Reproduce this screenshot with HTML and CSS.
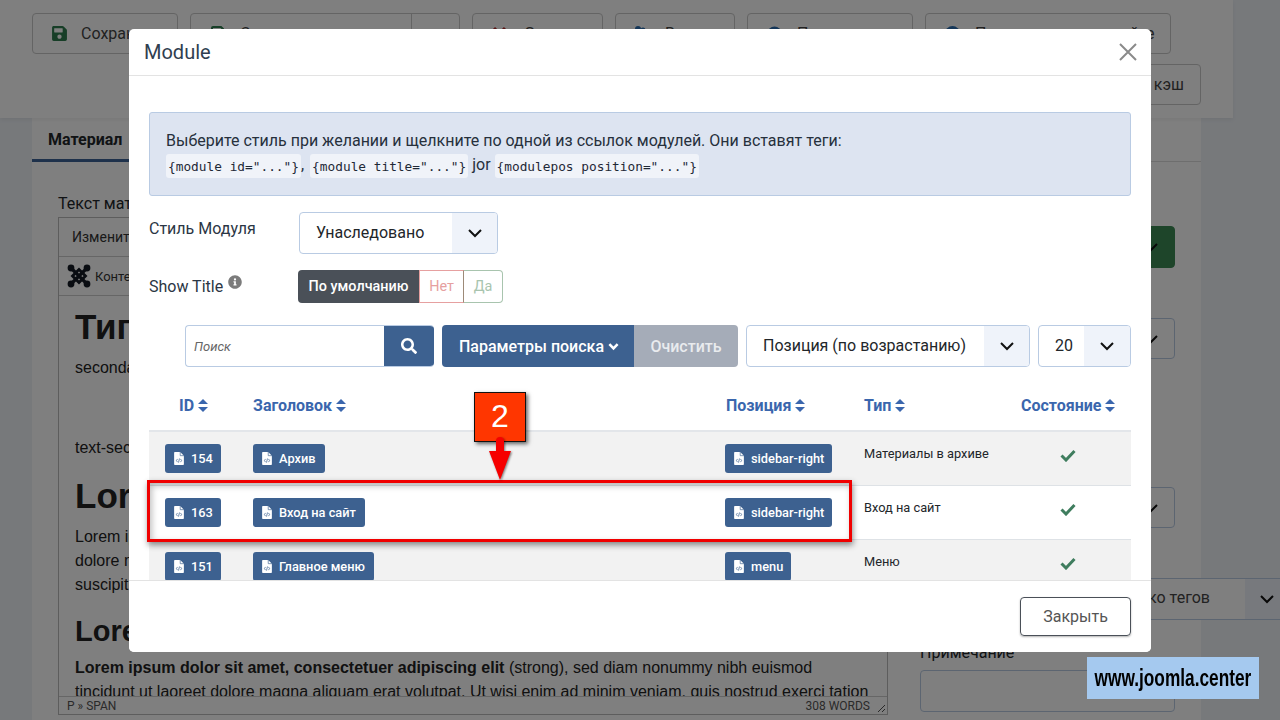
FILE: index.html
```html
<!DOCTYPE html>
<html lang="ru">
<head>
<meta charset="utf-8">
<title>Module</title>
<link rel="stylesheet" href="styles.css">
</head>
<body>
<div class="page">
  <header class="toolbar">
    <div class="tool-row">
      <div class="tool w145"><svg class="ti" viewBox="0 0 448 512"><path fill="#2f7d4f" d="M433.900 129.900l-83.900-83.900A48 48 0 0 0 316.100 32H48C21.500 32 0 53.500 0 80v352c0 26.500 21.500 48 48 48h352c26.500 0 48-21.500 48-48V163.900a48 48 0 0 0-14.100-34zM224 416c-35.300 0-64-28.700-64-64s28.700-64 64-64 64 28.700 64 64-28.700 64-64 64zm96-304.500V212c0 6.600-5.400 12-12 12H76c-6.600 0-12-5.400-12-12V108c0-6.600 5.400-12 12-12h228.500c3.200 0 6.200 1.300 8.500 3.500l3.500 3.500c2.200 2.300 3.500 5.300 3.500 8.500z"/></svg>Сохранить</div>
      <div class="tool w270"><span class="tmain"><svg class="tg" viewBox="0 0 15 15"><path d="M2 14V2a1 1 0 0 1 1-1h8l2 2v11z" fill="none" stroke="#2f7d4f" stroke-width="2"/></svg>Сохранить и закрыть</span><span class="tsplit"></span></div>
      <div class="tool w131"><svg class="tg tx" viewBox="0 0 15 15"><path d="M2 2l11 11M13 2L2 13" stroke="#b02a2a" stroke-width="3" fill="none"/></svg>Закрыть</div>
      <div class="tool w120"><svg class="tg" viewBox="0 0 15 15"><circle cx="3" cy="3" r="3" fill="#2a6db0"/><circle cx="8" cy="4" r="2.500" fill="#2a6db0"/><rect y="7" width="11" height="7" fill="#2a6db0"/></svg>Версии</div>
      <div class="tool w166"><svg class="tg" viewBox="0 0 15 15"><circle cx="7.500" cy="7.500" r="7" fill="#2a6db0"/></svg>Просмотр</div>
      <div class="tool w246"><svg class="tg" viewBox="0 0 15 15"><circle cx="7.500" cy="7.500" r="7.500" fill="#2a6db0"/></svg>Предпросмотр на сайте</div>
    </div>
    <div class="tool-row2"><div class="tool cache">Очистить кэш</div></div>
  </header>
  <main class="panel">
    <nav class="tabs"><span class="tab">Материал</span></nav>
    <div class="panel-body">
      <section class="editor-col">
        <div class="ed-label">Текст материала</div>
        <div class="editor">
          <div class="ed-menu">Изменить</div>
          <div class="ed-tools"><svg class="jicon" viewBox="0 0 24 24"><g fill="#141a24"><circle cx="4" cy="4" r="3.400"/><circle cx="20" cy="4" r="3.400"/><circle cx="4" cy="20" r="3.400"/><circle cx="20" cy="20" r="3.400"/></g><g fill="none" stroke="#141a24" stroke-width="3.200"><path d="M4 4l16 16M20 4L4 20"/><path d="M12 5.500l6.500 6.500-6.500 6.500L5.500 12z" stroke-width="2.800"/></g></svg>Контент</div>
          <div class="ed-body">
            <h1 class="h-a">Типография</h1>
            <p class="p-sec">secondary text</p>
            <p class="p-sec2">text-secondary</p>
            <h1 class="h-b">Lorem ipsum</h1>
            <p class="p-l">Lorem ipsum dolor sit amet, consectetuer adipiscing elit, sed diam nonummy nibh euismod tincidunt ut laoreet dolore magna aliquam erat volutpat. Ut wisi enim ad minim veniam, quis nostrud exerci tation ullamcorper suscipit lobortis nisl ut aliquip ex ea commodo consequat.</p>
            <h2 class="h-c">Lorem ipsum</h2>
            <p class="p-l"><b>Lorem ipsum dolor sit amet, consectetuer adipiscing elit</b> (strong), sed diam nonummy nibh euismod tincidunt ut laoreet dolore magna aliquam erat volutpat. Ut wisi enim ad minim veniam, quis nostrud exerci tation</p>
          </div>
          <div class="ed-status"><span>P » SPAN</span><span class="st-right">308 WORDS<svg class="grip" width="9" height="9" viewBox="0 0 9 9"><path d="M1 8l7-7M5 8l3-3" stroke="#555" stroke-width="1" fill="none"/></svg></span></div>
        </div>
      </section>
      <aside class="side-col">
        <div class="side-box green-box"><svg width="16" height="16" viewBox="0 0 16 16"><path d="M2 5l6 6 6-6" fill="none" stroke="#111" stroke-width="2"/></svg></div>
        <div class="side-box s1"><svg width="16" height="16" viewBox="0 0 16 16"><path d="M2 5l6 6 6-6" fill="none" stroke="#111" stroke-width="2"/></svg></div>
        <div class="side-box s2"><svg width="16" height="16" viewBox="0 0 16 16"><path d="M2 5l6 6 6-6" fill="none" stroke="#111" stroke-width="2"/></svg></div>
        <div class="side-tags"><span class="tags-text">Выберите несколько тегов</span><span class="tags-arrow"><svg width="16" height="16" viewBox="0 0 16 16"><path d="M2 5l6 6 6-6" fill="none" stroke="#111" stroke-width="2"/></svg></span></div>
        <div class="note-label">Примечание</div>
        <div class="note"></div>
      </aside>
    </div>
  </main>
</div>
<div class="scrim"></div>
<div class="modal">
  <div class="m-head"><span class="m-title">Module</span>
    <svg class="m-close" width="18" height="18" viewBox="0 0 18 18"><path d="M1 1l16 16M17 1L1 17" stroke="#8a8a8a" stroke-width="2" fill="none"/></svg>
  </div>
  <div class="m-body">
    <div class="alert">
      <div>Выберите стиль при желании и щелкните по одной из ссылок модулей. Они вставят теги:</div>
      <div class="alert-codes"><code>{module id="..."}</code><span class="cm">,</span> <code>{module title="..."}</code> jor <code>{modulepos position="..."}</code></div>
    </div>
    <div class="frow f1">
      <label class="flabel l1">Стиль Модуля</label>
      <div class="select w199"><span>Унаследовано</span><span class="sel-arrow"><svg width="16" height="16" viewBox="0 0 16 16"><path d="M2 5l6 6 6-6" fill="none" stroke="#111" stroke-width="2"/></svg></span></div>
    </div>
    <div class="frow f2">
      <label class="flabel l2">Show Title <svg class="info" viewBox="0 0 512 512"><path fill="#7c7c7c" d="M256 8C119 8 8 119 8 256s111 248 248 248 248-111 248-248S393 8 256 8zm0 110a42 42 0 1 1 0 84 42 42 0 0 1 0-84zm56 254c0 6.600-5.400 12-12 12h-88c-6.600 0-12-5.400-12-12v-24c0-6.600 5.400-12 12-12h12v-64h-12c-6.600 0-12-5.400-12-12v-24c0-6.600 5.400-12 12-12h64c6.600 0 12 5.400 12 12v100h12c6.600 0 12 5.400 12 12z"/></svg></label>
      <div class="btns"><span class="b-def">По умолчанию</span><span class="b-no">Нет</span><span class="b-yes">Да</span></div>
    </div>
    <div class="filters">
      <div class="search"><span class="s-ph">Поиск</span><span class="s-btn"><svg width="16" height="16" viewBox="0 0 512 512"><path fill="#fff" d="M505 442.700L405.300 343c-4.500-4.500-10.600-7-17-7H372c27.600-35.300 44-79.700 44-128C416 93.100 322.900 0 208 0S0 93.100 0 208s93.100 208 208 208c48.300 0 92.700-16.400 128-44v16.300c0 6.400 2.500 12.500 7 17l99.700 99.700c9.400 9.400 24.600 9.400 33.900 0l28.300-28.300c9.400-9.400 9.400-24.600.1-34zM208 336c-70.700 0-128-57.200-128-128 0-70.700 57.200-128 128-128 70.700 0 128 57.200 128 128 0 70.700-57.200 128-128 128z"/></svg></span></div>
      <div class="opts">Параметры поиска <svg width="11" height="11" viewBox="0 0 12 12"><path d="M1.500 3.500L6 8l4.500-4.500" fill="none" stroke="#fff" stroke-width="2.800"/></svg></div>
      <div class="clear">Очистить</div>
      <div class="select w284"><span>Позиция (по возрастанию)</span><span class="sel-arrow"><svg width="16" height="16" viewBox="0 0 16 16"><path d="M2 5l6 6 6-6" fill="none" stroke="#111" stroke-width="2"/></svg></span></div>
      <div class="select w93"><span>20</span><span class="sel-arrow a46"><svg width="16" height="16" viewBox="0 0 16 16"><path d="M2 5l6 6 6-6" fill="none" stroke="#111" stroke-width="2"/></svg></span></div>
    </div>
    <div class="table">
      <div class="t-head">
        <span class="c-id th">ID <i class="sort"></i></span>
        <span class="c-title th">Заголовок <i class="sort"></i></span>
        <span class="c-pos th">Позиция <i class="sort"></i></span>
        <span class="c-type th">Тип <i class="sort"></i></span>
        <span class="c-state th">Состояние <i class="sort"></i></span>
      </div>
      <div class="t-row odd">
        <span class="c-id"><a class="tag w56"><svg class="fi" viewBox="0 0 12 16"><path fill="#fff" d="M1 0h6.500L12 4.500V15a1 1 0 0 1-1 1H1a1 1 0 0 1-1-1V1a1 1 0 0 1 1-1z"/><path d="M7.500 0v4.500H12" fill="none" stroke="#3d6190" stroke-width=".8"/><path d="M4.200 8.500L2.800 10.500l1.400 2M7.800 8.500l1.400 2-1.400 2M6.600 8L5.400 13" stroke="#3d6190" fill="none" stroke-width=".9"/></svg>154</a></span>
        <span class="c-title"><a class="tag"><svg class="fi" viewBox="0 0 12 16"><path fill="#fff" d="M1 0h6.500L12 4.500V15a1 1 0 0 1-1 1H1a1 1 0 0 1-1-1V1a1 1 0 0 1 1-1z"/><path d="M7.500 0v4.500H12" fill="none" stroke="#3d6190" stroke-width=".8"/><path d="M4.200 8.500L2.800 10.500l1.400 2M7.800 8.500l1.400 2-1.400 2M6.600 8L5.400 13" stroke="#3d6190" fill="none" stroke-width=".9"/></svg>Архив</a></span>
        <span class="c-pos"><a class="tag"><svg class="fi" viewBox="0 0 12 16"><path fill="#fff" d="M1 0h6.500L12 4.500V15a1 1 0 0 1-1 1H1a1 1 0 0 1-1-1V1a1 1 0 0 1 1-1z"/><path d="M7.500 0v4.500H12" fill="none" stroke="#3d6190" stroke-width=".8"/><path d="M4.200 8.500L2.800 10.500l1.400 2M7.800 8.500l1.400 2-1.400 2M6.600 8L5.400 13" stroke="#3d6190" fill="none" stroke-width=".9"/></svg>sidebar-right</a></span>
        <span class="c-type">Материалы в архиве</span>
        <span class="c-state"><svg class="chk" viewBox="0 0 16 13"><path d="M1.500 6.500L6 11 14.500 2" fill="none" stroke="#3f7d5e" stroke-width="3"/></svg></span>
      </div>
      <div class="t-row">
        <span class="c-id"><a class="tag w56"><svg class="fi" viewBox="0 0 12 16"><path fill="#fff" d="M1 0h6.500L12 4.500V15a1 1 0 0 1-1 1H1a1 1 0 0 1-1-1V1a1 1 0 0 1 1-1z"/><path d="M7.500 0v4.500H12" fill="none" stroke="#3d6190" stroke-width=".8"/><path d="M4.200 8.500L2.800 10.500l1.400 2M7.800 8.500l1.400 2-1.400 2M6.600 8L5.400 13" stroke="#3d6190" fill="none" stroke-width=".9"/></svg>163</a></span>
        <span class="c-title"><a class="tag"><svg class="fi" viewBox="0 0 12 16"><path fill="#fff" d="M1 0h6.500L12 4.500V15a1 1 0 0 1-1 1H1a1 1 0 0 1-1-1V1a1 1 0 0 1 1-1z"/><path d="M7.500 0v4.500H12" fill="none" stroke="#3d6190" stroke-width=".8"/><path d="M4.200 8.500L2.800 10.500l1.400 2M7.800 8.500l1.400 2-1.400 2M6.600 8L5.400 13" stroke="#3d6190" fill="none" stroke-width=".9"/></svg>Вход на сайт</a></span>
        <span class="c-pos"><a class="tag"><svg class="fi" viewBox="0 0 12 16"><path fill="#fff" d="M1 0h6.500L12 4.500V15a1 1 0 0 1-1 1H1a1 1 0 0 1-1-1V1a1 1 0 0 1 1-1z"/><path d="M7.500 0v4.500H12" fill="none" stroke="#3d6190" stroke-width=".8"/><path d="M4.200 8.500L2.800 10.500l1.400 2M7.800 8.500l1.400 2-1.400 2M6.600 8L5.400 13" stroke="#3d6190" fill="none" stroke-width=".9"/></svg>sidebar-right</a></span>
        <span class="c-type">Вход на сайт</span>
        <span class="c-state"><svg class="chk" viewBox="0 0 16 13"><path d="M1.500 6.500L6 11 14.500 2" fill="none" stroke="#3f7d5e" stroke-width="3"/></svg></span>
      </div>
      <div class="t-row odd">
        <span class="c-id"><a class="tag w56"><svg class="fi" viewBox="0 0 12 16"><path fill="#fff" d="M1 0h6.500L12 4.500V15a1 1 0 0 1-1 1H1a1 1 0 0 1-1-1V1a1 1 0 0 1 1-1z"/><path d="M7.500 0v4.500H12" fill="none" stroke="#3d6190" stroke-width=".8"/><path d="M4.200 8.500L2.800 10.500l1.400 2M7.800 8.500l1.400 2-1.400 2M6.600 8L5.400 13" stroke="#3d6190" fill="none" stroke-width=".9"/></svg>151</a></span>
        <span class="c-title"><a class="tag"><svg class="fi" viewBox="0 0 12 16"><path fill="#fff" d="M1 0h6.500L12 4.500V15a1 1 0 0 1-1 1H1a1 1 0 0 1-1-1V1a1 1 0 0 1 1-1z"/><path d="M7.500 0v4.500H12" fill="none" stroke="#3d6190" stroke-width=".8"/><path d="M4.200 8.500L2.800 10.500l1.400 2M7.800 8.500l1.400 2-1.400 2M6.600 8L5.400 13" stroke="#3d6190" fill="none" stroke-width=".9"/></svg>Главное меню</a></span>
        <span class="c-pos"><a class="tag"><svg class="fi" viewBox="0 0 12 16"><path fill="#fff" d="M1 0h6.500L12 4.500V15a1 1 0 0 1-1 1H1a1 1 0 0 1-1-1V1a1 1 0 0 1 1-1z"/><path d="M7.500 0v4.500H12" fill="none" stroke="#3d6190" stroke-width=".8"/><path d="M4.200 8.500L2.800 10.500l1.400 2M7.800 8.500l1.400 2-1.400 2M6.600 8L5.400 13" stroke="#3d6190" fill="none" stroke-width=".9"/></svg>menu</a></span>
        <span class="c-type">Меню</span>
        <span class="c-state"><svg class="chk" viewBox="0 0 16 13"><path d="M1.500 6.500L6 11 14.500 2" fill="none" stroke="#3f7d5e" stroke-width="3"/></svg></span>
      </div>
    </div>
  </div>
  <div class="m-foot"><span class="close-btn">Закрыть</span></div>
</div>
<div class="hl-box"></div>
<div class="callout">2</div>
<svg class="arrow" width="22" height="45" viewBox="0 0 22 45"><path d="M7 5a4 4 0 0 1 8 0V15h7L11 44 0 15h7z" fill="#f60000"/></svg>
<div class="brand"><span class="brand-text">www.joomla.center</span></div>
</body>
</html>
```
FILE: styles.css
```css
* { box-sizing: border-box; }
html, body { margin: 0; height: 720px; overflow: hidden; }
body { font-family: Roboto, "Liberation Sans", sans-serif; color: #22262a; background: #eef2f7; font-size: 16px; position: relative; }
.page { height: 720px; overflow: hidden; }

/* background page */
.toolbar { width: 1233px; height: 118px; background: #fff; padding: 13px 32px 0; box-shadow: 0 2px 4px rgba(0,0,0,.06); position: relative; }
.tool-row { display: flex; gap: 12px; }
.tool-row2 { display: flex; justify-content: flex-end; margin-top: 10px; }
.tool { height: 41px; border: 1px solid #c8c8c8; border-radius: 4px; display: flex; align-items: center; padding-left: 19px; color: #444; white-space: nowrap; flex: none; }
.ti { width: 15px; height: 17px; margin-right: 14px; }
.tg { width: 15px; height: 15px; margin-right: 15px; flex: none; }
.tx { margin-right: 18px; }
.w145 { width: 146px; } .w270 { width: 270px; padding: 0; } .w131 { width: 131px; } .w120 { width: 120px; } .w166 { width: 166px; } .w246 { width: 246px; }
.tmain { display: flex; align-items: center; padding-left: 19px; width: 222px; overflow: hidden; }
.tsplit { border-left: 1px solid #c8c8c8; height: 100%; width: 48px; }
.cache { width: 320px; justify-content: flex-end; padding: 0 16px 0 0; }
.panel { width: 1169px; margin: 0 0 0 32px; height: 602px; background: #fff; }
.tabs { height: 44px; border-bottom: 1px solid #ddd; }
.tab { display: inline-block; height: 44px; line-height: 44px; padding: 0 16px; font-weight: 700; color: #22262a; border-bottom: 3px solid #3d6396; width: 100px; }
.panel-body { display: flex; padding: 0 0 0 26px; }
.editor-col { width: 830px; flex: none; padding-top: 30px; }
.ed-label { height: 24px; line-height: 24px; color: #22262a; }
.editor { border: 1px solid #bbb; height: 498px; display: flex; flex-direction: column; margin-top: 1px; }
.ed-menu { height: 39px; line-height: 39px; padding-left: 13px; font-size: 14px; color: #333; border-bottom: 1px solid #ccc; flex: none; }
.ed-tools { height: 39px; display: flex; align-items: center; padding-left: 8px; font-size: 13px; color: #333; border-bottom: 1px solid #ccc; flex: none; }
.jicon { width: 24px; height: 24px; margin-right: 4px; }
.ed-body { flex: 1; padding: 0 0 0 16px; overflow: hidden; font-family: "Liberation Sans", sans-serif; color: #222; min-height: 0; }
.h-a { margin: 10px 0 0; font-size: 35px; line-height: 42px; font-weight: 700; white-space: nowrap; }
.p-sec { margin: 8px 0 0; line-height: 24px; }
.p-sec2 { margin: 56px 0 0; line-height: 24px; }
.h-b { margin: 15px 0 0; font-size: 35px; line-height: 42px; }
.p-l { margin: 8px 0 0; line-height: 24px; width: 800px; }
.h-c { margin: 16px 0 0; font-size: 29px; line-height: 36px; }
.h-c + .p-l { margin-top: 7px; }
.ed-status { height: 18px; border-top: 1px solid #ccc; display: flex; justify-content: space-between; padding: 1px 1px 0 8px; font-size: 12px; line-height: 17px; color: #555; background: #fff; flex: none; }
.st-right { display: flex; align-items: center; gap: 7px; }
.grip { flex: none; margin-top: 4px; }
.side-col { width: 255px; margin-left: 32px; flex: none; }
.side-box { height: 42px; border-radius: 4px; display: flex; align-items: center; justify-content: flex-end; padding-right: 15px; border: 1px solid #b9cbe3; }
.green-box { margin-top: 64px; background: #3d8a55; border-color: #3d8a55; }
.s1 { margin-top: 50px; height: 41px; }
.s2 { margin-top: 128px; height: 41px; }
.side-tags { margin-top: 50px; height: 42px; width: 360px; border-top: 1px solid #b9cbe3; border-bottom: 1px solid #b9cbe3; display: flex; align-items: center; justify-content: flex-end; color: #444; background: #fff; }
.tags-text { margin-bottom: 4px; }
.tags-arrow { width: 35px; height: 100%; margin-left: 35px; background: #eff3fa; display: flex; align-items: center; padding-left: 14px; flex: none; }
.note-label { margin-top: 21px; line-height: 24px; white-space: nowrap; }
.note { height: 42px; border: 1px solid #b9cbe3; border-radius: 4px; margin-top: 5px; }

.scrim { position: absolute; inset: 0; background: rgba(0,0,0,.5); }

/* modal */
.modal { position: absolute; left: 129px; top: 29px; width: 1022px; height: 623px; background: #fff; border-radius: 5px; display: flex; flex-direction: column; overflow: hidden; }
.m-head { height: 47px; flex: none; border-bottom: 1px solid #e3e3e3; display: flex; align-items: center; justify-content: space-between; padding: 0 14px 0 15px; }
.m-title { font-size: 20px; color: #2f3e50; }
.m-close { flex: none; }
.m-body { flex: 1; padding: 36px 20px 0; overflow: hidden; min-height: 0; }
.alert { height: 84px; background: #dde4f1; border: 1px solid #b9cbe3; border-radius: 3px; padding: 18px 16px 0; color: #26303c; line-height: 20px; }
.alert-codes { margin-top: 2px; line-height: 24px; height: 24px; white-space: nowrap; }
code { font-family: "DejaVu Sans Mono", monospace; font-size: 12.800px; background: #f0f3f9; border-radius: 3px; padding: 4.500px 2px; color: #1f2937; }
.cm { margin-right: 2px; }
.frow { display: flex; }
.f1 { margin-top: 16px; }
.f2 { margin-top: 16px; }
.flabel { width: 150px; flex: none; color: #2b3644; line-height: 20px; }
.l1 { padding-top: 7px; }
.l2 { padding-top: 5px; }
.info { width: 14px; height: 14px; vertical-align: 3px; margin-left: 1px; }
.select { height: 42px; border: 1px solid #b9cbe3; border-radius: 4px; display: flex; align-items: center; justify-content: space-between; padding-left: 16px; color: #22262a; background: #fff; overflow: hidden; flex: none; }
.select > span:first-child { margin-bottom: 2px; }
.sel-arrow { width: 45px; height: 100%; background: #eff3fa; display: flex; align-items: center; justify-content: center; flex: none; }
.a46 { width: 46px; }
.w199 { width: 199px; } .w284 { width: 284px; } .w93 { width: 93px; }
.btns { display: flex; height: 33px; font-size: 14.400px; line-height: 33px; margin-left: -1px; }
.b-def { background: #4a5058; color: #fff; width: 121px; text-align: center; border-radius: 4px 0 0 4px; font-weight: 500; }
.b-no { width: 45px; text-align: center; color: #e6a0a0; border: 1px solid #e6a0a0; border-right-color: #9d8a78; line-height: 31px; }
.b-yes { width: 39px; text-align: center; color: #a8c4ae; border: 1px solid #a8c4ae; border-left: 0; border-radius: 0 4px 4px 0; line-height: 31px; }
.filters { display: flex; margin: 22px 0 0 36px; height: 42px; }
.search { width: 249px; display: flex; border: 1px solid #b9cbe3; border-right: 0; border-radius: 4px; overflow: hidden; justify-content: space-between; align-items: center; flex: none; }
.s-ph { font-size: 13px; font-style: italic; color: #666; padding-left: 8px; }
.s-btn { width: 50px; height: 42px; margin: -1px 0; background: #3d6190; display: flex; align-items: center; justify-content: center; flex: none; }
.opts { margin-left: 8px; width: 192px; background: #3d6190; color: #fff; border-radius: 4px 0 0 4px; display: flex; align-items: center; padding-left: 17px; flex: none; font-weight: 500; white-space: pre; }
.clear { width: 104px; background: #a5acb8; color: #e9ebee; border-radius: 0 4px 4px 0; display: flex; align-items: center; justify-content: center; font-weight: 500; flex: none; }
.filters .select { margin-left: 8px; }
.table { margin-top: 15px; font-size: 13px; }
.t-head { display: grid; grid-template-columns: 104px 472px 139px 156px 111px; height: 50px; padding-bottom: 2px; align-items: center; border-bottom: 2px solid #e3e6ea; }
.th { font-size: 16px; font-weight: 700; color: #3a66ad; display: flex; align-items: center; gap: 4px; white-space: nowrap; }
.t-head .c-id { padding-left: 30px; }
.t-head .c-pos { padding-left: 1px; }
.t-head .c-state { padding-left: 1px; justify-content: flex-start; }
.sort { width: 10px; height: 13px; flex: none; position: relative; display: inline-block; }
.sort::before, .sort::after { content: ""; position: absolute; left: 0; border-left: 5px solid transparent; border-right: 5px solid transparent; }
.sort::before { top: 0; border-bottom: 5.500px solid #3a66ad; }
.sort::after { bottom: 0; border-top: 5.500px solid #3a66ad; }
.t-row { display: grid; grid-template-columns: 104px 472px 139px 156px 111px; height: 54px; border-bottom: 1px solid #dee2e6; align-items: start; padding-top: 12px; color: #22262a; }
.odd { background: #f2f2f2; }
.c-id { padding-left: 16px; }
.tag { display: inline-flex; align-items: center; height: 29px; padding: 0 8px; background: #3d6190; color: #fff; border-radius: 3px; font-size: 12.800px; font-weight: 500; white-space: nowrap; }
.c-title .tag { padding-right: 9px; }
.w56 { width: 56px; }
.fi { width: 10px; height: 13px; margin-right: 7px; flex: none; margin-left: 1px; }
.t-row .c-type { padding-top: 1px; font-size: 12.800px; line-height: 17px; }
.c-state { display: flex; justify-content: center; }
.t-row .c-state { padding: 5px 15px 0 0; }
.chk { width: 16px; height: 13px; }
.m-foot { height: 72px; flex: none; border-top: 1px solid #e3e3e3; background: #fff; padding: 16px 20px 0 0; display: flex; justify-content: flex-end; }
.close-btn { width: 111px; height: 39px; border: 1px solid #4a5058; border-radius: 4px; display: flex; align-items: center; justify-content: center; color: #555; box-shadow: 0 1px 2px rgba(0,0,0,.3); }

/* annotations */
.hl-box { position: absolute; left: 147px; top: 480px; width: 705px; height: 62px; border: 3px solid #f00000; box-shadow: 1px 3px 6px rgba(0,0,0,.45), inset 2px 3px 6px rgba(0,0,0,.25); }
.callout { position: absolute; left: 474px; top: 392px; width: 52px; height: 50px; background: #ff3600; border: 1px solid #111; box-shadow: 2px 2px 4px rgba(0,0,0,.6); color: #fff; font: 32px/46px "Liberation Sans", sans-serif; text-align: center; }
.arrow { position: absolute; left: 489px; top: 436px; filter: drop-shadow(1px 1px 1px rgba(0,0,0,.5)); }
.brand { position: absolute; left: 1087px; top: 657px; width: 172px; height: 42px; background: #a5c9ef; display: flex; align-items: center; justify-content: center; overflow: hidden; }
.brand-text { color: #000; font: 700 24px/42px "Liberation Sans", sans-serif; white-space: nowrap; transform: scaleX(.72); flex: none; }
```
